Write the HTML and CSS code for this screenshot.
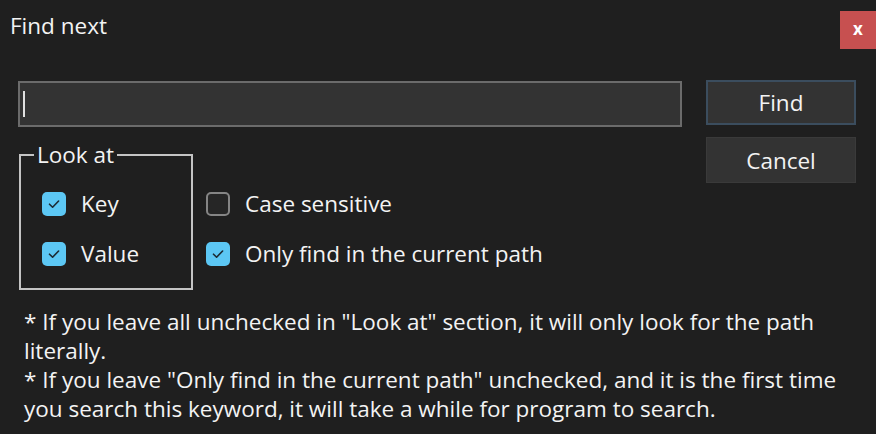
FILE: index.html
```html
<!DOCTYPE html>
<html>
<head>
<meta charset="utf-8">
<link rel="stylesheet" href="styles.css">
</head>
<body>
<div class="dialog">
  <div class="titlebar">
    <div class="title">Find next</div>
    <div class="close">x</div>
  </div>
  <div class="main">
    <div class="left">
      <div class="textbox"><span class="caret"></span></div>
      <div class="options">
        <fieldset class="group">
          <legend>Look at</legend>
          <div class="rows">
            <div class="check"><span class="box on"><svg viewBox="0 0 24 24" width="24" height="24"><path d="M7.5 12.2 L10.6 15.2 L16.6 9" fill="none" stroke="#1c2a33" stroke-width="1.6" stroke-linecap="round" stroke-linejoin="round"/></svg></span><span class="lbl">Key</span></div>
            <div class="check"><span class="box on"><svg viewBox="0 0 24 24" width="24" height="24"><path d="M7.5 12.2 L10.6 15.2 L16.6 9" fill="none" stroke="#1c2a33" stroke-width="1.6" stroke-linecap="round" stroke-linejoin="round"/></svg></span><span class="lbl">Value</span></div>
          </div>
        </fieldset>
        <div class="side rows">
          <div class="check"><span class="box off"></span><span class="lbl">Case sensitive</span></div>
          <div class="check"><span class="box on"><svg viewBox="0 0 24 24" width="24" height="24"><path d="M7.5 12.2 L10.6 15.2 L16.6 9" fill="none" stroke="#1c2a33" stroke-width="1.6" stroke-linecap="round" stroke-linejoin="round"/></svg></span><span class="lbl">Only find in the current path</span></div>
        </div>
      </div>
    </div>
    <div class="right">
      <div class="btn primary">Find</div>
      <div class="btn">Cancel</div>
    </div>
  </div>
  <div class="notes">
    <p>* If you leave all unchecked in "Look at" section, it will only look for the path<br>literally.</p>
    <p>* If you leave "Only find in the current path" unchecked, and it is the first time<br>you search this keyword, it will take a while for program to search.</p>
  </div>
</div>
</body>
</html>
```
FILE: styles.css
```css
html, body {
  margin: 0;
  padding: 0;
  background: #1f1f1f;
}
body {
  width: 876px;
  height: 434px;
  overflow: hidden;
  font-family: "Open Sans", "Noto Sans", sans-serif;
  font-size: 22.5px;
  color: #f3f3f3;
}
.titlebar {
  display: flex;
  justify-content: space-between;
  align-items: flex-start;
  height: 80px;
}
.title {
  margin-top: 12px;
  padding-left: 10px;
  line-height: 28px;
}
.close {
  margin-top: 11px;
  width: 36px;
  height: 38px;
  background: #c75050;
  color: #fff;
  font-weight: bold;
  font-size: 17px;
  line-height: 1;
  display: flex;
  align-items: center;
  justify-content: center;
  padding-bottom: 3px;
  box-sizing: border-box;
}
.main {
  display: flex;
  padding-left: 18px;
}
.left {
  width: 664px;
}
.textbox {
  margin-top: 1px;
  height: 46px;
  box-sizing: border-box;
  border: 2px solid #6b6b6b;
  background: #333333;
  display: flex;
  align-items: center;
  padding-left: 3px;
}
.caret {
  width: 2px;
  height: 26px;
  background: #e0e0e0;
}
.options {
  display: flex;
  margin-top: 16px;
  align-items: flex-start;
}
.group {
  margin: 0 0 0 1px;
  width: 174px;
  box-sizing: border-box;
  border: 2px solid #c4c4c4;
  padding: 25px 0 22px 21px;
}
.group legend {
  margin-left: -8px;
  padding: 0 3px 0 3px;
  line-height: 24px;
}
.rows {
  display: flex;
  flex-direction: column;
  gap: 26px;
}
.side {
  margin-left: 13px;
  padding-top: 49px;
}
.check {
  display: flex;
  align-items: center;
  height: 24px;
  gap: 15px;
  white-space: nowrap;
}
.box {
  width: 24px;
  height: 24px;
  box-sizing: border-box;
  border-radius: 5px;
  display: block;
  flex: none;
}
.box svg {
  display: block;
}
.box.on {
  background: #5cc7f4;
}
.box.off {
  border: 2px solid #858585;
  background: #262626;
}
.lbl {
  line-height: 24px;
}
.right {
  margin-left: 24px;
  width: 150px;
  display: flex;
  flex-direction: column;
  gap: 12px;
}
.btn {
  height: 46px;
  box-sizing: border-box;
  background: #333333;
  border: 1px solid #3a3a3a;
  display: flex;
  align-items: center;
  justify-content: center;
}
.btn.primary {
  height: 45px;
  border: 2px solid #3b4d5e;
}
.notes {
  margin-top: 17px;
  padding-left: 24px;
}
.notes p {
  margin: 0;
  line-height: 29px;
  white-space: nowrap;
}
```
